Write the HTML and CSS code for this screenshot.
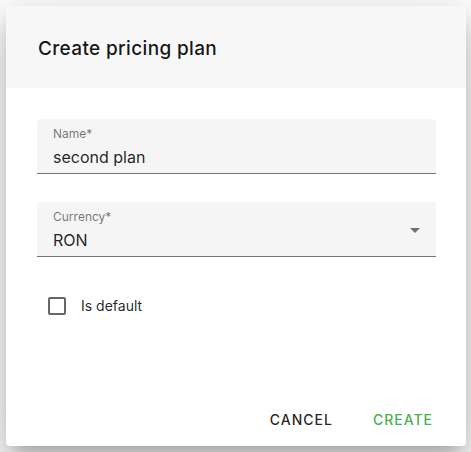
FILE: index.html
```html
<!DOCTYPE html>
<html>
<head>
<meta charset="utf-8">
<link rel="stylesheet" href="styles.css">
</head>
<body>
<div class="dialog">
  <div class="header">
    <h2 class="title">Create pricing plan</h2>
  </div>
  <div class="content">
    <div class="field">
      <span class="label">Name*</span>
      <span class="value">second plan</span>
    </div>
    <div class="field select">
      <span class="label">Currency*</span>
      <span class="value">RON</span>
      <span class="arrow"></span>
    </div>
    <label class="check">
      <span class="box"></span>
      <span class="check-label">Is default</span>
    </label>
  </div>
  <div class="actions">
    <button class="btn cancel">Cancel</button>
    <button class="btn create">Create</button>
  </div>
</div>
</body>
</html>
```

FILE: styles.css
```css
html, body {
  margin: 0;
  padding: 0;
  background: #ffffff;
  font-family: Inter, Roboto, "Liberation Sans", sans-serif;
}
body {
  padding: 6px;
}
.dialog {
  width: 460px;
  height: 440px;
  background: #fff;
  border-radius: 4px;
  overflow: hidden;
  display: flex;
  flex-direction: column;
  box-shadow: 0px 11px 15px -7px rgba(0,0,0,0.2), 0px 24px 38px 3px rgba(0,0,0,0.14), 0px 9px 46px 8px rgba(0,0,0,0.12);
}
.header {
  height: 82px;
  box-sizing: border-box;
  background: #f7f7f7;
  padding: 31px 32px 0 32px;
}
.title {
  margin: 0;
  font-size: 19px;
  line-height: 24px;
  font-weight: 500;
  letter-spacing: 0.35px;
  color: rgba(0,0,0,0.92);
}
.content {
  flex: 1;
  padding: 31px 30px 0 31px;
  display: flex;
  flex-direction: column;
}
.field {
  position: relative;
  height: 55px;
  box-sizing: border-box;
  background: #f5f5f5;
  border-radius: 4px 4px 0 0;
  border-bottom: 1px solid #757575;
  padding: 7px 16px 0 16px;
  display: flex;
  flex-direction: column;
  margin-bottom: 28px;
}
.label {
  font-size: 12px;
  line-height: 16px;
  color: rgba(0,0,0,0.54);
}
.value {
  margin-top: 5px;
  font-size: 16px;
  line-height: 20px;
  color: rgba(0,0,0,0.87);
}
.arrow {
  position: absolute;
  right: 16px;
  top: 26px;
  width: 0;
  height: 0;
  border-left: 5px solid transparent;
  border-right: 5px solid transparent;
  border-top: 5px solid rgba(0,0,0,0.54);
}
.check {
  display: flex;
  align-items: center;
  margin-top: 11px;
  margin-left: 11px;
}
.box {
  width: 18px;
  height: 18px;
  box-sizing: border-box;
  border: 2px solid rgba(0,0,0,0.6);
  border-radius: 2px;
}
.check-label {
  margin-left: 15px;
  font-size: 14px;
  line-height: 20px;
  color: rgba(0,0,0,0.87);
}
.actions {
  display: flex;
  justify-content: flex-end;
  gap: 24px;
  padding: 0 25px 8px 0;
}
.btn {
  font-family: Inter, Roboto, "Liberation Sans", sans-serif;
  background: none;
  border: none;
  padding: 8px 8px;
  font-size: 14px;
  line-height: 20px;
  font-weight: 500;
  letter-spacing: 1px;
  text-transform: uppercase;
}
.cancel {
  color: rgba(0,0,0,0.87);
}
.create {
  color: #4caf50;
}
```
